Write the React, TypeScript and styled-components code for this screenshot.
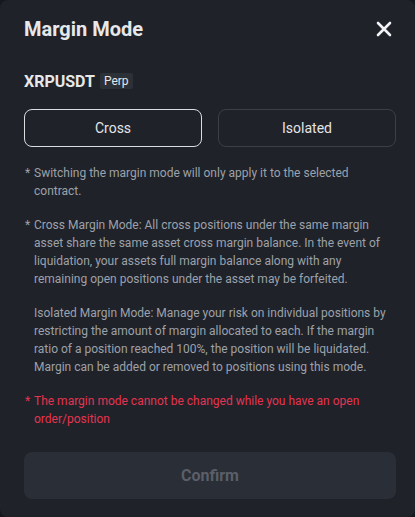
import React, { useState } from 'react';
import styled, { createGlobalStyle } from 'styled-components';

const GlobalStyle = createGlobalStyle`
  html, body {
    margin: 0;
    padding: 0;
    background: #16181d;
  }
  * {
    box-sizing: border-box;
  }
`;

const Modal = styled.div`
  width: 415px;
  height: 517px;
  background: #1f2229;
  border-radius: 8px;
  padding: 15px 19px 0 24px;
  display: flex;
  flex-direction: column;
  font-family: Roboto, 'Liberation Sans', sans-serif;
  color: #eaecef;
`;

const Header = styled.div`
  display: flex;
  align-items: center;
  justify-content: space-between;
  height: 28px;
`;

const Title = styled.h2`
  margin: 0;
  font-size: 20px;
  font-weight: 700;
  color: #e6e8ea;
`;

const CloseButton = styled.button`
  border: 0;
  background: none;
  padding: 0;
  width: 24px;
  height: 24px;
  display: flex;
  align-items: center;
  justify-content: center;
  cursor: pointer;
`;

const Symbol = styled.div`
  display: flex;
  align-items: center;
  gap: 5px;
  margin-top: 29px;
  height: 18px;
`;

const SymbolName = styled.span`
  font-size: 16px;
  font-weight: 700;
  color: #e6e8ea;
`;

const Tag = styled.span`
  background: #2c3037;
  border-radius: 2px;
  padding: 0 4px;
  font-size: 12px;
  line-height: 16px;
  color: #e4e6e9;
`;

const ModeRow = styled.div`
  display: grid;
  grid-template-columns: 1fr 1fr;
  gap: 16px;
  margin-top: 19px;
`;

const ModeButton = styled.button<{ active: boolean }>`
  height: 38px;
  border-radius: 8px;
  background: transparent;
  border: ${(p) => (p.active ? '1.5px solid #dcdde0' : '1px solid #3b3f47')};
  color: #e3e5e8;
  font-family: inherit;
  font-size: 14px;
  cursor: pointer;
`;

const Notes = styled.div`
  margin-top: 17px;
  display: flex;
  flex-direction: column;
  gap: 16px;
`;

const Note = styled.p<{ danger?: boolean; bullet?: boolean }>`
  margin: 0;
  position: relative;
  padding-left: 10px;
  font-size: 12px;
  line-height: 18px;
  white-space: nowrap;
  color: ${(p) => (p.danger ? '#e5344f' : '#9da1a9')};

  &::before {
    content: ${(p) => (p.bullet ? "'*'" : "''")};
    position: absolute;
    left: 1px;
    top: 0;
  }
`;

const ConfirmButton = styled.button`
  margin-top: 24px;
  height: 47px;
  border: 0;
  border-radius: 8px;
  background: #2a2e36;
  color: #5a5f69;
  font-family: inherit;
  font-size: 16px;
  font-weight: 700;
  cursor: not-allowed;
`;

interface NoteData {
  lines: string[];
  bullet?: boolean;
  danger?: boolean;
}

const notes: NoteData[] = [
  {
    bullet: true,
    lines: [
      'Switching the margin mode will only apply it to the selected',
      'contract.',
    ],
  },
  {
    bullet: true,
    lines: [
      'Cross Margin Mode: All cross positions under the same margin',
      'asset share the same asset cross margin balance. In the event of',
      'liquidation, your assets full margin balance along with any',
      'remaining open positions under the asset may be forfeited.',
    ],
  },
  {
    lines: [
      'Isolated Margin Mode: Manage your risk on individual positions by',
      'restricting the amount of margin allocated to each. If the margin',
      'ratio of a position reached 100%, the position will be liquidated.',
      'Margin can be added or removed to positions using this mode.',
    ],
  },
  {
    bullet: true,
    danger: true,
    lines: [
      'The margin mode cannot be changed while you have an open',
      'order/position',
    ],
  },
];

const App: React.FC = () => {
  const [mode, setMode] = useState<'cross' | 'isolated'>('cross');

  return (
    <>
      <GlobalStyle />
      <Modal>
        <Header>
          <Title>Margin Mode</Title>
          <CloseButton aria-label="close">
            <svg width="16" height="16" viewBox="0 0 16 16">
              <path d="M2 2 L14 14 M14 2 L2 14" stroke="#f2f3f5" strokeWidth="2.6" strokeLinecap="round" />
            </svg>
          </CloseButton>
        </Header>
        <Symbol>
          <SymbolName>XRPUSDT</SymbolName>
          <Tag>Perp</Tag>
        </Symbol>
        <ModeRow>
          <ModeButton active={mode === 'cross'} onClick={() => setMode('cross')}>
            Cross
          </ModeButton>
          <ModeButton active={mode === 'isolated'} onClick={() => setMode('isolated')}>
            Isolated
          </ModeButton>
        </ModeRow>
        <Notes>
          {notes.map((note) => (
            <Note key={note.lines[0]} bullet={note.bullet} danger={note.danger}>
              {note.lines.map((line, i) => (
                <React.Fragment key={line}>
                  {i > 0 && <br />}
                  {line}
                </React.Fragment>
              ))}
            </Note>
          ))}
        </Notes>
        <ConfirmButton disabled>Confirm</ConfirmButton>
      </Modal>
    </>
  );
};

export default App;
